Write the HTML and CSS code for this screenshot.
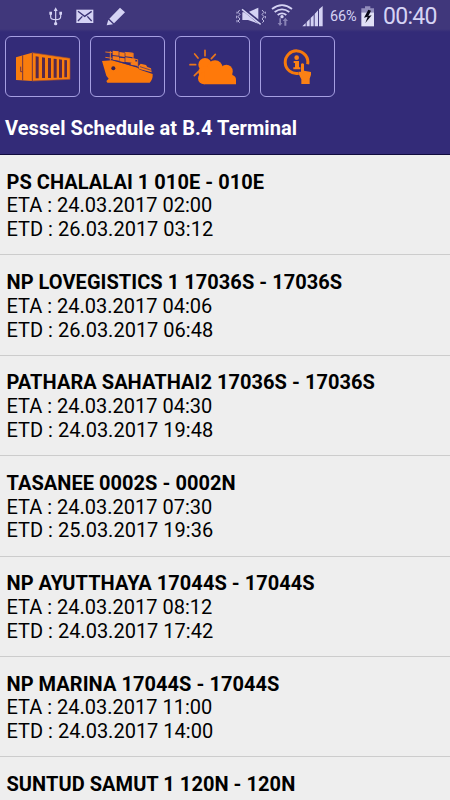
FILE: index.html
```html
<!DOCTYPE html>
<html lang="en">
<head>
<meta charset="utf-8">
<title>Vessel Schedule</title>
<link rel="stylesheet" href="styles.css">
</head>
<body>
<header class="header">
  <div class="status">
    <svg class="usb" width="14" height="20" viewBox="147 18 42 60"><g fill="none" stroke="#d5d3f4" stroke-width="3.5"><path d="M167 25V67M152 38V48Q152 56 167 56Q182 56 182 47V38"/></g><g fill="#d5d3f4"><path d="M167 19L173 30H161ZM148 32H156V41H148ZM178 32H186V41H178Z"/><circle cx="167" cy="68" r="5"/></g></svg>
    <svg class="mail" width="18" height="15" viewBox="230 25 54 45"><path fill="#d5d3f4" d="M231 27H282V67H231Z"/><path fill="none" stroke="#3b3476" stroke-width="4" d="M236 32L256 47L277 32M236 61L249 47M277 61L264 47"/></svg>
    <svg class="pencil" width="20" height="19" viewBox="318 19 60 57"><path fill="#d5d3f4" d="M360 21L375 35L342 68L328 54ZM325 57L339 71L320 74Z"/></svg>
    <svg class="mute" width="30" height="20" viewBox="34 18 90 60"><path fill="#d5d3f4" d="M53 34H70L101 20V68L70 57H53Z"/><path stroke="#3b3476" stroke-width="10" d="M54 23L110 69"/><path fill="none" stroke="#d5d3f4" stroke-width="4.5" d="M52 25L108 70"/><path fill="none" stroke="#d5d3f4" stroke-width="2.5" d="M45 27L40 34L46 40L40 47L46 54L40 60L45 65M37 32V38M36 44V52M37 57V64M112 27L118 34L112 40L118 47L112 54L118 60L113 65M122 32V38M122 45V52"/></svg>
    <svg class="wifi" width="23" height="24" viewBox="139 8 69 72"><g fill="none" stroke="#d5d3f4" stroke-width="5.5"><path d="M142 26Q172 3 202 26M150 35Q172 19 194 35M159 44Q172 34 185 44"/></g><circle cx="172" cy="49" r="5" fill="#d5d3f4"/><path fill="#8983b6" d="M164 54H169V68H173L166 77L159 68H164ZM182 52L190 62H185V76H179V62H174Z"/></svg>
    <svg class="signal" width="21" height="21" viewBox="232 16 63 63"><path fill="#d5d3f4" d="M233 77L243 67V77ZM246 64L255 55V77H246ZM258 52L267 43V77H258ZM270 40L280 29V77H270ZM283 26L294 16V77H283Z"/></svg>
    <span class="percent">66%</span>
    <svg class="battery" width="13" height="21" viewBox="408 15 39 63"><path fill="#928dbc" d="M420 16H436V22H447V34H409V22H420Z"/><path fill="#e1e0f5" d="M409 34H447V76H409Z"/><path fill="#090817" d="M430 26L417 50L428 47L421 66L440 43L430 45L438 29Z"/></svg>
    <span class="clock">00:40</span>
  </div>
  <nav class="tools">
    <button class="tool" aria-label="Containers"><svg viewBox="15 12 225 180"><path fill="#f97d0d" d="M48 73L96 59L210 76V139L96 144L48 141Z"/><g fill="none" stroke="#713443" stroke-width="3"><path d="M68 67V142M97 59V144M62 101V116H67"/></g><path fill="#57294c" d="M107 70L116 71V136H107ZM126 73L135 74V135H126ZM144 75L153 76V135H144ZM161 77L170 78V134H161ZM177 79L186 80V134H177ZM193 81L201 82V133H193Z"/><path fill="none" stroke="#a34f34" stroke-width="2" d="M96 59L210 76V139L96 144"/></svg></button>
    <button class="tool" aria-label="Vessels"><svg viewBox="15 12 225 180"><path fill="#fb790b" d="M51 84L82 82L158 104L165 110L203 123Q204 139 194 149H67L64 144L71 137L64 128Z"/><path fill="#f97d19" d="M83 53L101 55V68L83 66ZM83 69L102 71V83L83 80ZM103 57L119 59V72L103 70ZM103 74L119 76V88L103 85ZM121 57L145 60V73L121 70ZM121 73L151 77V90L121 87ZM137 82L158 86V99L137 96ZM160 100L167 92L183 96L187 102L198 106L200 118L163 108Z"/><g fill="none" stroke="#e77524" stroke-width="3"><path d="M61 57L82 59M61 73L82 76M76 54V83M119 58L145 61M144 62V78L158 80V101"/></g><g fill="none" stroke="#332b78" stroke-width="2"><path d="M82 81L119 91L158 102M165 101L199 112"/></g><circle cx="85" cy="106" r="6" fill="#37204e"/></svg></button>
    <button class="tool" aria-label="Weather"><svg viewBox="15 12 225 180"><g fill="#ff790a"><circle cx="105" cy="95" r="20"/><circle cx="135" cy="105" r="23"/><circle cx="169" cy="114" r="19"/><circle cx="103" cy="117" r="18"/><circle cx="102" cy="136" r="18"/><path d="M103 114H187V126Q198 130 198 140V154H102Z"/></g><path stroke="#e9761c" stroke-width="5" stroke-linecap="round" d="M105 52V68M74 63L84 75M136 64L124 77M60 95H77M73 128L86 115"/></svg></button>
    <button class="tool" aria-label="Information"><svg viewBox="15 12 225 180"><path fill="none" stroke="#f6790c" stroke-width="9" d="M131 121A34 34 0 1 1 158 94"/><circle cx="125" cy="74" r="7" fill="#fa8115"/><path fill="#fa8115" d="M116 84H132V103H136V109H115V103H120V90H116Z"/><path fill="#fa8115" d="M138 93Q142 88 147 93V113L168 117V125L164 137V153H139V139L131 123V116H138Z"/></svg></button>
  </nav>
  <h1 class="title">Vessel Schedule at B.4 Terminal</h1>
</header>
<main class="list">
  <article class="row"><h2>PS CHALALAI 1 010E - 010E</h2><p>ETA : 24.03.2017 02:00</p><p>ETD : 26.03.2017 03:12</p></article>
  <article class="row"><h2>NP LOVEGISTICS 1 17036S - 17036S</h2><p>ETA : 24.03.2017 04:06</p><p>ETD : 26.03.2017 06:48</p></article>
  <article class="row"><h2>PATHARA SAHATHAI2 17036S - 17036S</h2><p>ETA : 24.03.2017 04:30</p><p>ETD : 24.03.2017 19:48</p></article>
  <article class="row"><h2>TASANEE 0002S - 0002N</h2><p>ETA : 24.03.2017 07:30</p><p>ETD : 25.03.2017 19:36</p></article>
  <article class="row"><h2>NP AYUTTHAYA 17044S - 17044S</h2><p>ETA : 24.03.2017 08:12</p><p>ETD : 24.03.2017 17:42</p></article>
  <article class="row"><h2>NP MARINA 17044S - 17044S</h2><p>ETA : 24.03.2017 11:00</p><p>ETD : 24.03.2017 14:00</p></article>
  <article class="row"><h2>SUNTUD SAMUT 1 120N - 120N</h2></article>
</main>
</body>
</html>
```
FILE: styles.css
```css
* { box-sizing: border-box; }
html, body { margin: 0; height: 800px; overflow: hidden; }
body { display: flex; flex-direction: column; background: #eee; color: #000; font-family: Roboto, sans-serif; }
h1, h2, p { margin: 0; }
svg { display: block; flex: none; }
.header { flex: none; height: 155px; background: #332b78; border-bottom: 1px solid #100b3d; }
.status { display: flex; align-items: center; height: 33px; background: linear-gradient(#40377b 0 29px, #332b78 32px); color: #d5d3f4; }
.usb { margin-left: 49px; }
.mail { margin-left: 13px; }
.pencil { margin-left: 12px; }
.mute { margin-left: 110px; }
.wifi { margin-left: 5px; margin-top: -3px; }
.signal { margin-left: 8px; }
.percent { width: 30px; margin-left: 7px; font-size: 14.5px; letter-spacing: -.1px; white-space: nowrap; }
.battery { margin-left: 1px; }
.clock { margin-left: 9px; font-size: 23px; letter-spacing: -.7px; white-space: nowrap; }
.tools { display: flex; gap: 10px; padding: 3px 5px 0; }
.tool { width: 75px; height: 61px; padding: 0; border: 1.5px solid #a69fe2; border-radius: 6px; background: transparent; }
.tool svg { width: 75px; height: 60px; margin: -1px; }
.title { margin: 19px 0 0 5px; color: #fff; font-size: 20px; line-height: 24px; font-weight: 700; letter-spacing: .08px; white-space: nowrap; }
.list { flex: 1; overflow: hidden; }
.row { height: 100.4px; padding: 15.7px 6.5px 0; border-bottom: 1px solid #ccc; font-size: 20px; line-height: 23.8px; white-space: nowrap; }
.row h2 { font-size: 20px; font-weight: 700; letter-spacing: .05px; }
```
